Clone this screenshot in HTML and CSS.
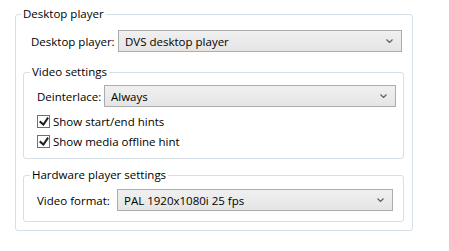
FILE: index.html
```html
<!DOCTYPE html>
<html>
<head>
<meta charset="utf-8">
<link rel="stylesheet" href="styles.css">
</head>
<body>
<fieldset class="group outer">
  <legend class="legend outer-legend">Desktop player</legend>
  <div class="row row-player">
    <span class="label label-player">Desktop player:</span>
    <div class="combo"><span class="combo-text">DVS desktop player</span><svg class="chev" width="7" height="4" viewBox="0 0 7 4"><path d="M0.5 0.5 L3.5 3.5 L6.5 0.5" fill="none" stroke="#606060" stroke-width="1.2"/></svg></div>
  </div>
  <fieldset class="group inner video">
    <legend class="legend inner-legend">Video settings</legend>
    <div class="row row-deint">
      <span class="label label-deint">Deinterlace:</span>
      <div class="combo"><span class="combo-text">Always</span><svg class="chev" width="7" height="4" viewBox="0 0 7 4"><path d="M0.5 0.5 L3.5 3.5 L6.5 0.5" fill="none" stroke="#606060" stroke-width="1.2"/></svg></div>
    </div>
    <div class="check-row first">
      <span class="check"><svg width="10" height="9" viewBox="0 0 10 9.1"><path d="M9.97 1.22L4.7 9.1L4.52 9.1L0 5.19L1.28 3.52L4.26 6.09L8.33 0L9.97 1.22Z" fill="#212121"/></svg></span>
      <span class="check-label">Show start/end hints</span>
    </div>
    <div class="check-row">
      <span class="check"><svg width="10" height="9" viewBox="0 0 10 9.1"><path d="M9.97 1.22L4.7 9.1L4.52 9.1L0 5.19L1.28 3.52L4.26 6.09L8.33 0L9.97 1.22Z" fill="#212121"/></svg></span>
      <span class="check-label">Show media offline hint</span>
    </div>
  </fieldset>
  <fieldset class="group inner hardware">
    <legend class="legend inner-legend">Hardware player settings</legend>
    <div class="row row-format">
      <span class="label label-format">Video format:</span>
      <div class="combo"><span class="combo-text">PAL 1920x1080i 25 fps</span><svg class="chev" width="7" height="4" viewBox="0 0 7 4"><path d="M0.5 0.5 L3.5 3.5 L6.5 0.5" fill="none" stroke="#606060" stroke-width="1.2"/></svg></div>
    </div>
  </fieldset>
</fieldset>
</body>
</html>
```

FILE: styles.css
```css
* { box-sizing: border-box; }
html, body { margin: 0; padding: 0; background: #ffffff; }
body {
  font-family: "Open Sans", "Noto Sans", sans-serif;
  font-size: 11.5px;
  color: #000000;
  width: 449px;
  height: 251px;
  overflow: hidden;
}
.group {
  border: 1px solid #d5dfe5;
  border-radius: 3px;
  min-width: 0;
}
.outer {
  margin: 6px 0 0 15px;
  width: 398px;
  padding: 0 8px 8px 7px;
}
.legend {
  line-height: 16px;
  height: 16px;
  padding: 0 2px;
}
.outer-legend { margin-left: -2px; }
.inner-legend { margin-left: -7px; }
.row {
  display: flex;
  align-items: center;
}
.row-player {
  margin-top: 8px;
  padding-left: 8px;
  padding-right: 2px;
}
.label { flex: none; }
.label-player { width: 87px; }
.label-deint { width: 67px; }
.label-format { width: 80px; }
.combo {
  flex: 1;
  height: 22px;
  border: 1px solid #acacac;
  background: linear-gradient(#f0f0f0, #e5e5e5);
  display: flex;
  align-items: center;
  padding: 0 6px 0 6px;
}
.combo-text { flex: 1; white-space: nowrap; }
.chev { flex: none; margin-right: 2px; }
.inner {
  margin: 12px 0 0 0;
  padding: 0 7px 0 13px;
}
.video { padding-bottom: 7px; }
.row-deint { margin-top: 5px; }
.check-row {
  display: flex;
  align-items: center;
  height: 20px;
}
.check-row.first { margin-top: 4px; }
.check {
  width: 13px;
  height: 13px;
  border: 1px solid #707070;
  background: #ffffff;
  display: flex;
  align-items: center;
  justify-content: center;
  margin-right: 3px;
}
.hardware {
  margin-top: 8px;
  padding-bottom: 10px;
  padding-right: 10px;
}
.row-format { margin-top: 6px; }
```
